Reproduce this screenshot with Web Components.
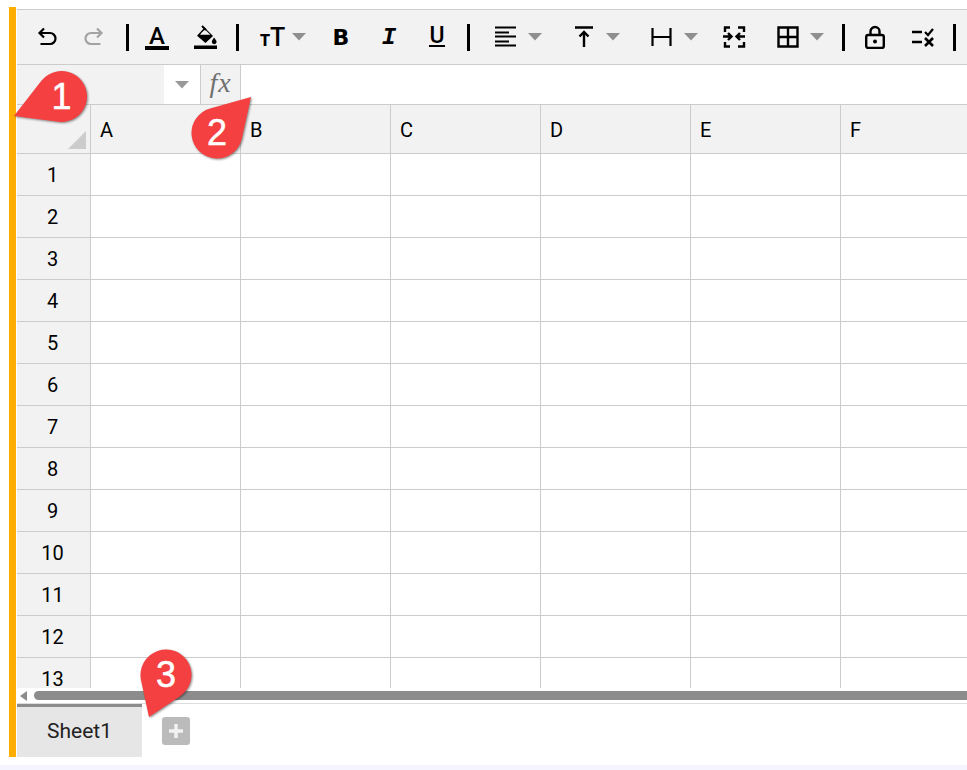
<!DOCTYPE html>
<html>
<head>
<meta charset="utf-8">
<title>Sheet</title>
<style>
  html, body { margin: 0; height: 770px; overflow: hidden; background: #fff; }
  body { display: flex; flex-direction: column; font-family: Roboto, "Liberation Sans", sans-serif; }
  .strip { margin-top: 8px; flex: 1; background: #f5f5ff; }
</style>
</head>
<body>
<sheet-app>
  <sheet-toolbar></sheet-toolbar>
  <sheet-formula></sheet-formula>
  <sheet-grid columns="A B C D E F" rows="13"></sheet-grid>
  <sheet-scroll></sheet-scroll>
  <sheet-tabs><span>Sheet1</span></sheet-tabs>
  <sheet-pin cx="61.5" cy="96.5" tx="14" ty="116">1</sheet-pin>
  <sheet-pin cx="217" cy="133" tx="251" ty="97">2</sheet-pin>
  <sheet-pin cx="166" cy="675" tx="149" ty="717">3</sheet-pin>
</sheet-app>
<div class="strip"></div>
<script>
const CARET = `<svg class="caret" width="14" height="8" viewBox="0 0 14 8"><path d="M0 0H14L7 7.5z" fill="#8f8f8f"/></svg>`;
const line = (d, w = 2, c = '#000') => `<path d="${d}" fill="none" stroke="${c}" stroke-width="${w}"/>`;
const svg = (body) => `<svg width="24" height="24" viewBox="0 0 24 24">${body}</svg>`;

const ICONS = {
  undo: svg(line('M9 3.500L4.500 8 9 12.500M4.500 8H15a5.500 5.500 0 0 1 0 11H5.500', 2.200)),
  redo: svg(line('M15 3.500L19.500 8 15 12.500M19.500 8H9a5.500 5.500 0 0 0 0 11h9.500', 2.200, '#a3a3a3')),
  color: `<span class="glyph color">A</span>`,
  fill: svg(`<path d="M10.500 2.500L19 11l-7.500 7L3 10.800z" fill="#000"/><path d="M7.800 7.500l3.200-3.100 5.300 5.400H6z" fill="#f2f2f2"/><path d="M8 1l4 4" stroke="#000" stroke-width="2"/><path d="M20 12.500c1.800 2.300 2.600 3.300 2.600 4.300a2.400 2.400 0 0 1-4.800 0c0-1 .8-2 2.200-4.300z" fill="#000"/><rect y="20.500" x="0" width="23" height="3.500" fill="#000"/>`),
  size: `<span class="glyph size"><small>T</small>T</span>`,
  bold: `<span class="glyph bold">B</span>`,
  italic: `<span class="glyph italic">I</span>`,
  under: `<span class="glyph under">U</span>`,
  align: svg(line('M1 2.500H22M1 7.500H15M1 11.500H22M1 16.500H15M1 20.500H22', 2.200)),
  valign: svg(line('M3 2.500H21M12 22V7M7.500 11.500L12 7l4.500 4.500', 2.400)),
  height: svg(line('M2.500 3V21M20.500 3V21M2.500 12H20.500', 2.200)),
  merge: svg(line('M8 2.500H3V7M3 17V21.500H8M16 2.500H22V7M22 17V21.500H16M1 11.500H9M6 8l3.500 3.500L6 15M23 11.500H15M18 8l-3.500 3.500L18 15', 2.400)),
  borders: svg(line('M2.500 2.500H21.500V21.500H2.500zM12 2.500V21.500M2.500 12H21.500', 2.400)),
  lock: svg(line('M7.500 10V6.500a4.500 4.500 0 0 1 9 0V10', 2.400) + `<rect x="3.200" y="10" width="17.600" height="13" rx="2" fill="none" stroke="#000" stroke-width="2.400"/><circle cx="12" cy="16.500" r="2" fill="#000"/>`),
  check: svg(line('M1 7H11M1 17H11', 2.400) + line('M14 7l3 3 5-6', 2.200) + line('M14 13l8 8M22 13l-8 8', 2.600)),
};

const toolTemplate = document.createElement('template');
toolTemplate.innerHTML = `
<style>
  :host { display: flex; align-items: center; height: 24px; flex: none; }
  svg { display: block; }
  .caret { margin-left: var(--caret-gap, 10px); }
  .glyph { display: block; width: 24px; height: 24px; position: relative; text-align: center; color: #000; }
  .color { font: 500 24px/22px Roboto, sans-serif; }
  .color::after { content: ""; position: absolute; left: 0; right: 0; top: 21px; height: 4px; background: #000; }
  .size { font: 500 25px/26px Roboto, sans-serif; letter-spacing: -1px; text-align: right; white-space: nowrap; }
  .size small { font-size: 16px; font-weight: 900; margin-right: 1px; }
  .bold { font: 700 22px/26px "DejaVu Sans", sans-serif; }
  .italic { font: italic 700 24px/26px "Liberation Mono", monospace; }
  .under { font: 500 23px/22px Roboto, sans-serif; }
  .under::after { content: ""; position: absolute; left: 4px; right: 4px; top: 20px; height: 2px; background: #000; }
</style>
<div id="box" style="display:flex;align-items:center"></div>`;

class SheetTool extends HTMLElement {
  constructor() {
    super();
    this.attachShadow({ mode: 'open' });
    this.shadowRoot.appendChild(toolTemplate.content.cloneNode(true));
  }
  connectedCallback() {
    const icon = ICONS[this.getAttribute('icon')] || '';
    this.shadowRoot.getElementById('box').innerHTML = icon + (this.hasAttribute('drop') ? CARET : '');
  }
}
customElements.define('sheet-tool', SheetTool);

const barTemplate = document.createElement('template');
barTemplate.innerHTML = `
<style>
  :host {
    display: flex;
    align-items: center;
    box-sizing: border-box;
    height: 56px;
    padding-left: 18px;
    background: #f2f2f2;
    border-top: 1px solid #ccc;
    border-bottom: 1px solid #ccc;
    overflow: hidden;
  }
  .sep { flex: none; width: 3px; height: 27px; background: #000; }
</style>
<sheet-tool icon="undo"></sheet-tool>
<sheet-tool icon="redo" style="margin-left:23px"></sheet-tool>
<div class="sep" style="margin-left:20px"></div>
<sheet-tool icon="color" style="margin-left:16px"></sheet-tool>
<sheet-tool icon="fill" style="margin-left:25px"></sheet-tool>
<div class="sep" style="margin-left:18px"></div>
<sheet-tool icon="size" drop style="margin-left:21px;--caret-gap:8px"></sheet-tool>
<sheet-tool icon="bold" style="margin-left:23px"></sheet-tool>
<sheet-tool icon="italic" style="margin-left:24px"></sheet-tool>
<sheet-tool icon="under" style="margin-left:24px"></sheet-tool>
<div class="sep" style="margin-left:18px"></div>
<sheet-tool icon="align" drop style="margin-left:24px"></sheet-tool>
<sheet-tool icon="valign" drop style="margin-left:30px"></sheet-tool>
<sheet-tool icon="height" drop style="margin-left:30px"></sheet-tool>
<sheet-tool icon="merge" style="margin-left:24px"></sheet-tool>
<sheet-tool icon="borders" drop style="margin-left:30px"></sheet-tool>
<div class="sep" style="margin-left:18px"></div>
<sheet-tool icon="lock" style="margin-left:18px"></sheet-tool>
<sheet-tool icon="check" style="margin-left:24px"></sheet-tool>
<div class="sep" style="margin-left:18px"></div>`;

class SheetToolbar extends HTMLElement {
  constructor() {
    super();
    this.attachShadow({ mode: 'open' });
    this.shadowRoot.appendChild(barTemplate.content.cloneNode(true));
  }
}
customElements.define('sheet-toolbar', SheetToolbar);

const formulaTemplate = document.createElement('template');
formulaTemplate.innerHTML = `
<style>
  :host { display: flex; box-sizing: border-box; height: 40px; border-bottom: 1px solid #ccc; background: #fff; }
  .name { width: 147px; background: #f2f2f2; }
  .drop { width: 36px; display: flex; align-items: center; justify-content: center; border-right: 1px solid #ccc; }
  .fx {
    width: 39px; border-right: 1px solid #ccc; background: #f2f2f2; color: #707070;
    font: italic 28px/35px "Liberation Serif", serif; letter-spacing: 1px; text-align: center;
  }
  .input { flex: 1; }
</style>
<div class="name"></div>
<div class="drop"><svg width="14" height="8" viewBox="0 0 14 8"><path d="M0 0H14L7 7.500z" fill="#999"/></svg></div>
<div class="fx">fx</div>
<div class="input"></div>`;

class SheetFormula extends HTMLElement {
  constructor() {
    super();
    this.attachShadow({ mode: 'open' });
    this.shadowRoot.appendChild(formulaTemplate.content.cloneNode(true));
  }
}
customElements.define('sheet-formula', SheetFormula);

const gridTemplate = document.createElement('template');
gridTemplate.innerHTML = `
<style>
  :host { display: block; height: 583px; overflow: hidden; font: 400 20px Roboto, sans-serif; color: #000; }
  .grid { display: grid; grid-template-rows: 49px; grid-auto-rows: 42px; width: max-content; }
  .cell, .head, .row, .corner { box-sizing: border-box; border-right: 1px solid #ccc; border-bottom: 1px solid #ccc; }
  .head, .row, .corner { background: #f2f2f2; display: flex; align-items: center; }
  .head { padding: 2px 0 0 9px; }
  .row { justify-content: center; padding-right: 2px; }
  .corner { position: relative; }
  .corner::after {
    content: ""; position: absolute; right: 4px; bottom: 4px; width: 18px; height: 18px;
    background: #ccc; clip-path: polygon(100% 0, 100% 100%, 0 100%);
  }
</style>
<div class="grid"></div>`;

class SheetGrid extends HTMLElement {
  constructor() {
    super();
    this.attachShadow({ mode: 'open' });
    this.shadowRoot.appendChild(gridTemplate.content.cloneNode(true));
  }
  connectedCallback() {
    const cols = this.getAttribute('columns').split(' ');
    const rows = Number(this.getAttribute('rows'));
    const grid = this.shadowRoot.querySelector('.grid');
    grid.style.gridTemplateColumns = `74px repeat(${cols.length}, 150px)`;
    let html = '<div class="corner"></div>';
    for (const c of cols) html += `<div class="head">${c}</div>`;
    for (let r = 1; r <= rows; r++) {
      html += `<div class="row">${r}</div>`;
      html += '<div class="cell"></div>'.repeat(cols.length);
    }
    grid.innerHTML = html;
  }
}
customElements.define('sheet-grid', SheetGrid);

const scrollTemplate = document.createElement('template');
scrollTemplate.innerHTML = `
<style>
  :host { display: flex; align-items: center; box-sizing: border-box; height: 15px; padding-left: 3px; background: #fff; }
  svg { flex: none; }
  .thumb { flex: 1; height: 9px; margin-left: 7px; border-radius: 5px 0 0 5px; background: #8c8c8c; }
</style>
<svg width="7" height="10" viewBox="0 0 7 10"><path d="M7 0V10L0 5z" fill="#8c8c8c"/></svg>
<div class="thumb"></div>`;

class SheetScroll extends HTMLElement {
  constructor() {
    super();
    this.attachShadow({ mode: 'open' });
    this.shadowRoot.appendChild(scrollTemplate.content.cloneNode(true));
  }
}
customElements.define('sheet-scroll', SheetScroll);

const tabsTemplate = document.createElement('template');
tabsTemplate.innerHTML = `
<style>
  :host { display: flex; align-items: center; height: 54px; border-top: 1px solid #ddd; box-sizing: border-box; background: #fff; }
  .tab {
    box-sizing: border-box; width: 125px; height: 53px; align-self: flex-start; padding-bottom: 2px;
    display: flex; align-items: center; justify-content: center;
    background: #e6e6e6; border-top: 3px solid #8c8c8c;
    font: 400 21px Roboto, sans-serif; color: #222;
  }
  .add {
    width: 28px; height: 28px; margin-left: 20px; border-radius: 3px; background: #bbb;
    display: flex; align-items: center; justify-content: center;
  }
</style>
<div class="tab"><slot></slot></div>
<div class="add"><svg width="16" height="16" viewBox="0 0 16 16"><path d="M8 1V15M1 8H15" stroke="#f2f2f2" stroke-width="3.500"/></svg></div>`;

class SheetTabs extends HTMLElement {
  constructor() {
    super();
    this.attachShadow({ mode: 'open' });
    this.shadowRoot.appendChild(tabsTemplate.content.cloneNode(true));
  }
}
customElements.define('sheet-tabs', SheetTabs);

const pinTemplate = document.createElement('template');
pinTemplate.innerHTML = `
<style>
  :host { position: absolute; left: 0; top: 0; width: 0; height: 0; display: block; }
  svg { position: absolute; left: 0; top: 0; overflow: visible; filter: drop-shadow(1px 1px 1px rgba(0,0,0,.45)); }
  .num {
    position: absolute; width: 50px; height: 50px; margin: -25px 0 0 -25px;
    display: flex; align-items: center; justify-content: center;
    font: 400 36px/1 "Liberation Sans", Arial, sans-serif; color: #fff;
    -webkit-text-stroke: 0.5px #fff;
  }
</style>
<svg width="1" height="1"><path fill="#f44040"/></svg>
<div class="num"><slot></slot></div>`;

// round marker with a tail drawn to the point it calls out
class SheetPin extends HTMLElement {
  constructor() {
    super();
    this.attachShadow({ mode: 'open' });
    this.shadowRoot.appendChild(pinTemplate.content.cloneNode(true));
  }
  connectedCallback() {
    const [cx, cy, tx, ty] = ['cx', 'cy', 'tx', 'ty'].map((n) => Number(this.getAttribute(n)));
    const r = 25.5;
    const dist = Math.hypot(tx - cx, ty - cy);
    const dir = Math.atan2(ty - cy, tx - cx);
    const a = Math.acos(r / dist);
    const p1 = [cx + r * Math.cos(dir - a), cy + r * Math.sin(dir - a)];
    const p2 = [cx + r * Math.cos(dir + a), cy + r * Math.sin(dir + a)];
    this.shadowRoot.querySelector('path').setAttribute('d',
      `M${tx} ${ty}L${p1[0]} ${p1[1]}A${r} ${r} 0 1 0 ${p2[0]} ${p2[1]}Z`);
    const num = this.shadowRoot.querySelector('.num');
    num.style.left = cx + 'px';
    num.style.top = cy + 'px';
  }
}
customElements.define('sheet-pin', SheetPin);

const appTemplate = document.createElement('template');
appTemplate.innerHTML = `
<style>
  :host {
    display: block; box-sizing: border-box; height: 750px; margin: 7px 0 0 9px; padding: 2px 0 0 1px;
    border-left: 7px solid #ffad00; background: #fff;
  }
  .overlay { position: absolute; left: 0; top: 0; }
</style>
<slot></slot>
<div class="overlay"><slot name="pins"></slot></div>`;

class SheetApp extends HTMLElement {
  constructor() {
    super();
    this.attachShadow({ mode: 'open' });
    this.shadowRoot.appendChild(appTemplate.content.cloneNode(true));
  }
  connectedCallback() {
    this.querySelectorAll('sheet-pin').forEach((p) => p.setAttribute('slot', 'pins'));
  }
}
customElements.define('sheet-app', SheetApp);
</script>
</body>
</html>
